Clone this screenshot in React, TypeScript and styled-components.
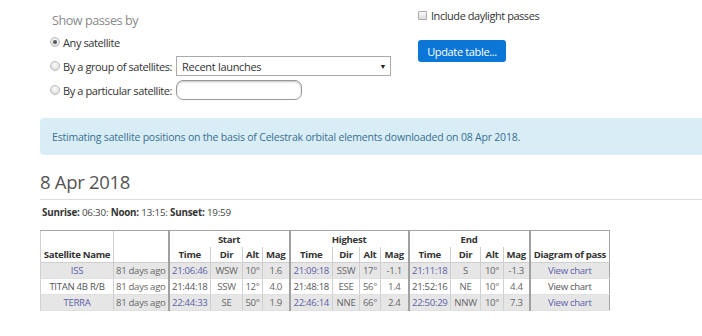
import styled, { createGlobalStyle } from "styled-components";

const GlobalStyle = createGlobalStyle`
  html, body {
    margin: 0;
    padding: 0;
    background: #fff;
    overflow: hidden;
  }
  body {
    font-family: "Open Sans", "Noto Sans", sans-serif;
    color: #333;
  }
`;

const Page = styled.div`
  width: 702px;
  height: 336px;
  padding-left: 40px;
  box-sizing: border-box;
`;

const Controls = styled.div`
  display: flex;
  padding: 4px 0 0 10px;
`;

const Options = styled.div`
  width: 367px;
  display: flex;
  flex-direction: column;
`;

const Legend = styled.div`
  margin-top: 7px;
  height: 19px;
  line-height: 19px;
  font-size: 12.6px;
  letter-spacing: -0.45px;
  color: #8a8a8a;
  padding-left: 2px;
`;

const RadioRow = styled.label`
  display: flex;
  align-items: center;
  height: 24px;
  font-size: 11px;
  letter-spacing: -0.4px;
  color: #333;
`;

const Radio = styled.span<{ $checked?: boolean }>`
  width: 8px;
  height: 8px;
  border-radius: 50%;
  border: 1px solid #bbb;
  background: radial-gradient(circle at 50% 35%, #fdfdfd, #d2d2d2);
  margin-right: 3px;
  display: flex;
  align-items: center;
  justify-content: center;
  &::after {
    content: "";
    width: 4px;
    height: 4px;
    border-radius: 50%;
    background: ${(p) => (p.$checked ? "#555" : "transparent")};
  }
`;

const FieldLabel = styled.span`
  margin-right: 4px;
`;

const Select = styled.div`
  width: 215px;
  height: 20px;
  box-sizing: border-box;
  border: 1px solid #aaa;
  background: #fff;
  display: flex;
  align-items: center;
  justify-content: space-between;
  padding: 0 4px 0 5px;
  font-size: 11px;
  letter-spacing: -0.3px;
`;

const Arrow = styled.span`
  font-size: 7px;
  color: #222;
`;

const TextInput = styled.div`
  width: 126px;
  height: 20px;
  box-sizing: border-box;
  border: 1px solid #9a9a9a;
  border-radius: 7px;
  box-shadow: inset 0 1px 2px rgba(0, 0, 0, 0.25);
  background: #fff;
`;

const Side = styled.div`
  display: flex;
  flex-direction: column;
  align-items: flex-start;
  padding-left: 1px;
`;

const CheckRow = styled.label`
  display: flex;
  align-items: center;
  height: 22px;
  font-size: 11px;
  letter-spacing: -0.45px;
  color: #333;
`;

const CheckBox = styled.span`
  width: 7px;
  height: 7px;
  border: 1px solid #aaa;
  border-radius: 1px;
  background: linear-gradient(#fafafa, #dcdcdc);
  margin-right: 4px;
`;

const UpdateButton = styled.button`
  margin-top: 14px;
  width: 88px;
  height: 22px;
  border: none;
  border-radius: 3px;
  background: #0b76d6;
  color: #fff;
  font-family: inherit;
  font-size: 11px;
  letter-spacing: -0.35px;
  padding: 0;
`;

const Alert = styled.div`
  margin-top: 16px;
  margin-right: -8px;
  height: 37px;
  box-sizing: border-box;
  background: #d9edf7;
  border-radius: 4px;
  padding-left: 12px;
  display: flex;
  align-items: center;
  font-size: 10.5px;
  letter-spacing: -0.2px;
  color: #3a6f8f;
`;

const Heading = styled.h2`
  margin: 15px 0 0;
  height: 24px;
  line-height: 24px;
  font-size: 18.5px;
  letter-spacing: -0.3px;
  font-weight: 400;
  color: #555;
`;

const Rule = styled.hr`
  margin: 5px -8px 0 0;
  border: none;
  border-top: 1px solid #ddd;
`;

const SunLine = styled.div`
  margin-top: 7px;
  height: 12px;
  line-height: 12px;
  font-size: 9.8px;
  letter-spacing: -0.2px;
  color: #444;
  padding-left: 2px;
  b {
    font-weight: 700;
    color: #333;
  }
`;

const PassTable = styled.table`
  margin-top: 11px;
  width: 569px;
  table-layout: fixed;
  border-collapse: collapse;
  border: 1px solid #a5a5a5;
  font-size: 9.6px;
  letter-spacing: -0.3px;
`;

const Th = styled.th<{ $group?: boolean; $top?: boolean; $span?: boolean }>`
  height: ${(p) => (p.$top ? "16px" : "15px")};
  padding: 0;
  font-weight: 700;
  color: #333;
  text-align: center;
  vertical-align: bottom;
  background: #fff;
  border-left: ${(p) => (p.$group ? "2px solid #a0a0a0" : "1px solid #cfcfcf")};
  border-top: ${(p) => (p.$top ? "1px solid #a5a5a5" : "none")};
  border-bottom: ${(p) => (p.$top && !p.$span ? "none" : "1px solid #cfcfcf")};
  line-height: 15px;
  white-space: nowrap;
`;

const Row = styled.tr<{ $shaded?: boolean }>`
  background: ${(p) => (p.$shaded ? "#e6e6e6" : "#fff")};
  a {
    color: ${(p) => (p.$shaded ? "#5d5fa8" : "#555")};
    text-decoration: none;
  }
`;

const Td = styled.td<{ $group?: boolean }>`
  height: 15px;
  padding: 0;
  text-align: center;
  color: #666;
  line-height: 15px;
  border-left: ${(p) => (p.$group ? "2px solid #a0a0a0" : "1px solid #cfcfcf")};
  border-bottom: 1px solid #e0e0e0;
  white-space: nowrap;
`;

const widths = [73, 55, 42, 32, 20, 27, 43, 27, 21, 28, 42, 30, 23, 26, 80];

type Pass = {
  name: string;
  age: string;
  start: string[];
  high: string[];
  end: string[];
};

const passes: Pass[] = [
  {
    name: "ISS",
    age: "81 days ago",
    start: ["21:06:46", "WSW", "10°", "1.6"],
    high: ["21:09:18", "SSW", "17°", "-1.1"],
    end: ["21:11:18", "S", "10°", "-1.3"],
  },
  {
    name: "TITAN 4B R/B",
    age: "81 days ago",
    start: ["21:44:18", "SSW", "12°", "4.0"],
    high: ["21:48:18", "ESE", "56°", "1.4"],
    end: ["21:52:16", "NE", "10°", "4.4"],
  },
  {
    name: "TERRA",
    age: "81 days ago",
    start: ["22:44:33", "SE", "50°", "1.9"],
    high: ["22:46:14", "NNE", "66°", "2.4"],
    end: ["22:50:29", "NNW", "10°", "7.3"],
  },
];

const subHeads = ["Time", "Dir", "Alt", "Mag"];

const PassCells = ({ data }: { data: string[] }) => (
  <>
    <Td $group>
      <a href="#">{data[0]}</a>
    </Td>
    <Td>{data[1]}</Td>
    <Td>{data[2]}</Td>
    <Td>{data[3]}</Td>
  </>
);

const App = () => {
  return (
    <Page>
      <GlobalStyle />
      <Controls>
        <Options>
          <Legend>Show passes by</Legend>
          <RadioRow>
            <Radio $checked />
            Any satellite
          </RadioRow>
          <RadioRow>
            <Radio />
            <FieldLabel>By a group of satellites:</FieldLabel>
            <Select>
              Recent launches
              <Arrow>▼</Arrow>
            </Select>
          </RadioRow>
          <RadioRow>
            <Radio />
            <FieldLabel>By a particular satellite:</FieldLabel>
            <TextInput />
          </RadioRow>
        </Options>
        <Side>
          <CheckRow>
            <CheckBox />
            Include daylight passes
          </CheckRow>
          <UpdateButton>Update table...</UpdateButton>
        </Side>
      </Controls>

      <Alert>
        Estimating satellite positions on the basis of Celestrak orbital elements downloaded on 08 Apr 2018.
      </Alert>

      <Heading>8 Apr 2018</Heading>
      <Rule />

      <SunLine>
        <b>Sunrise:</b> 06:30: <b>Noon:</b> 13:15: <b>Sunset:</b> 19:59
      </SunLine>

      <PassTable>
        <colgroup>
          {widths.map((w, i) => (
            <col key={i} style={{ width: w }} />
          ))}
        </colgroup>
        <thead>
          <tr>
            <Th $top $span rowSpan={2}>
              Satellite Name
            </Th>
            <Th $top $span rowSpan={2} />
            <Th $top $group colSpan={4}>Start</Th>
            <Th $top $group colSpan={4}>Highest</Th>
            <Th $top $group colSpan={4}>End</Th>
            <Th $top $span $group rowSpan={2}>
              Diagram of pass
            </Th>
          </tr>
          <tr>
            {[0, 1, 2].flatMap((g) =>
              subHeads.map((h, i) => (
                <Th key={`${g}-${h}`} $group={i === 0}>
                  {h}
                </Th>
              ))
            )}
          </tr>
        </thead>
        <tbody>
          {passes.map((p, idx) => (
            <Row key={p.name} $shaded={idx !== 1}>
              <Td>
                <a href="#">{p.name}</a>
              </Td>
              <Td>{p.age}</Td>
              <PassCells data={p.start} />
              <PassCells data={p.high} />
              <PassCells data={p.end} />
              <Td $group>
                <a href="#">View chart</a>
              </Td>
            </Row>
          ))}
        </tbody>
      </PassTable>
    </Page>
  );
};

export default App;
